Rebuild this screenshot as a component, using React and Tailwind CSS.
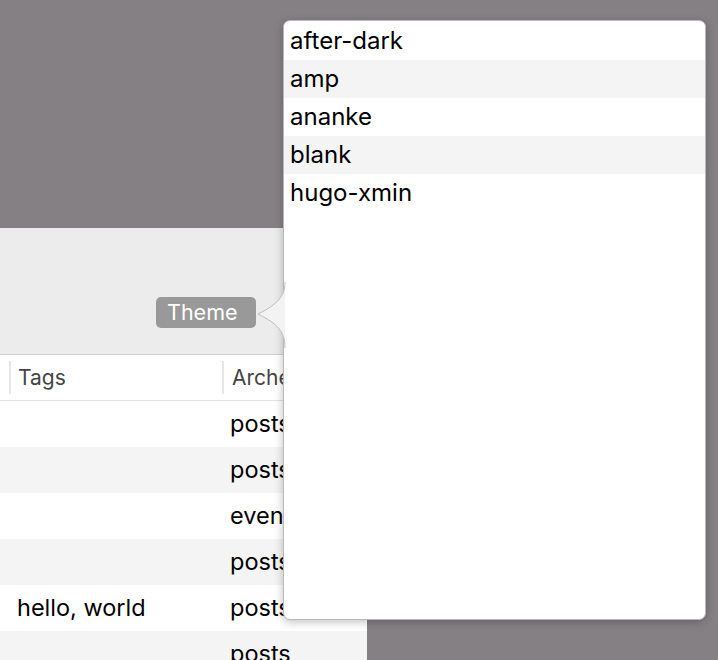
import React from 'react';

const themes = ['after-dark', 'amp', 'ananke', 'blank', 'hugo-xmin'];
const rows = [
  { tags: '', archetype: 'posts' },
  { tags: '', archetype: 'posts' },
  { tags: '', archetype: 'events' },
  { tags: '', archetype: 'posts' },
  { tags: 'hello, world', archetype: 'posts' },
  { tags: '', archetype: 'posts' },
];

const font = { fontFamily: 'Inter, "Liberation Sans", sans-serif' };

function ThemePopover() {
  return (
    <div className="absolute left-[256px] top-[20px] flex items-start">
      {/* arrow */}
      <svg width="30" height="66" viewBox="0 0 30 66" className="mt-[262px] -mr-[3px] relative z-10">
        <path d="M29 0 C29 14 22 22 2 32 C22 42 29 50 29 66 Z" fill="#f3f3f3" />
        <path d="M29 0 C29 14 22 22 2 32 C22 42 29 50 29 66" fill="none" stroke="#bdbdbd" strokeWidth="1" />
      </svg>
      <div className="w-[423px] h-[600px] bg-white rounded-[7px] border border-[#b9b9b9] shadow-[0_2px_10px_rgba(0,0,0,0.25)] overflow-hidden pt-[1px]">
        {themes.map((t, i) => (
          <div
            key={t}
            className={`h-[38px] flex items-center pl-[6px] text-[24px] text-black ${i % 2 === 1 ? 'bg-[#f4f4f4]' : 'bg-white'}`}
          >
            {t}
          </div>
        ))}
      </div>
    </div>
  );
}

export default function App() {
  return (
    <div className="relative w-[718px] h-[660px] overflow-hidden bg-[#858084]" style={font}>
      {/* window */}
      <div className="absolute left-0 top-[228px] w-[367px] h-[432px] bg-white flex flex-col overflow-hidden">
        <div className="h-[127px] shrink-0 bg-[#ececec] border-b border-[#cfcfcf] flex items-end justify-end pb-[26px] pr-[111px]">
          <div className="h-[31px] w-[100px] rounded-[5px] bg-[#999999] text-white text-[21.5px] flex items-center pl-[11px]">
            Theme
          </div>
        </div>
        <div className="h-[46px] shrink-0 flex items-center border-b border-[#e3e3e3] text-[21px] text-[#444]">
          <div className="w-[9px] shrink-0" />
          <div className="w-[213px] shrink-0 h-[33px] border-l-2 border-[#e6e6e6] flex items-center pl-[7px]">Tags</div>
          <div className="flex-1 h-[33px] border-l-2 border-[#e6e6e6] flex items-center pl-[8px] whitespace-nowrap overflow-hidden">Archetype</div>
        </div>
        {rows.map((r, i) => (
          <div
            key={i}
            className={`h-[46px] shrink-0 flex items-center text-[23.5px] text-black ${i % 2 === 1 ? 'bg-[#f4f4f4]' : 'bg-white'}`}
          >
            <div className="w-[230px] shrink-0 pl-[17px]">{r.tags}</div>
            <div className="flex-1 whitespace-nowrap overflow-hidden">{r.archetype}</div>
          </div>
        ))}
      </div>
      <ThemePopover />
    </div>
  );
}
